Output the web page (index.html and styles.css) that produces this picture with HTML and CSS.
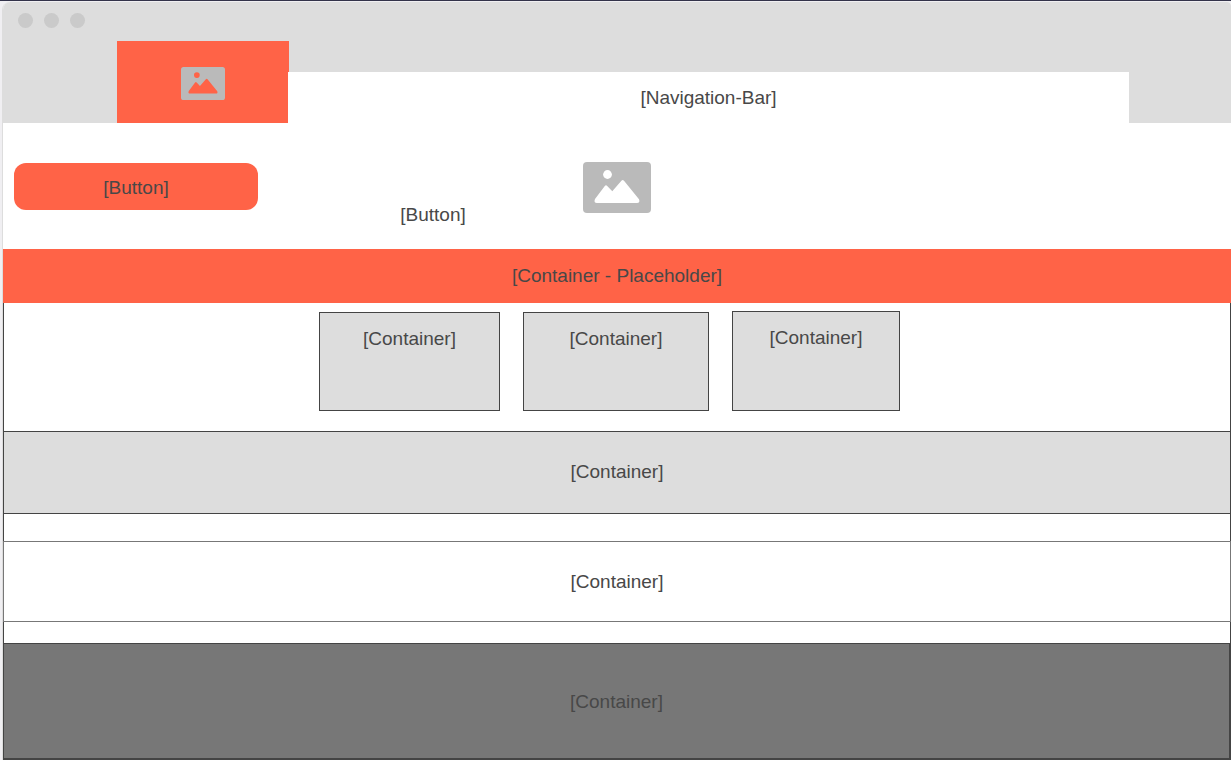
FILE: index.html
```html
<!DOCTYPE html>
<html lang="en">
<head>
  <meta charset="utf-8">
  <title>Wireframe</title>
  <link rel="stylesheet" href="styles.css">
</head>
<body>
  <div class="window">
    <header class="header">
      <div class="dots"><span class="dot"></span><span class="dot"></span><span class="dot"></span></div>
      <div class="header-row">
        <div class="logo">
          <svg class="picture picture-small" viewBox="0 0 68 51" role="img" aria-label="Logo">
            <rect width="68" height="51" rx="4" fill="#bababa"/>
            <g class="picture-scene">
              <circle cx="24.5" cy="12.5" r="4.4"/>
              <path d="M12 37 21.8 24Q23 22.6 24.2 24L29.3 29.3 38.4 18.8Q39.7 17.4 41 18.8L56 37.3Q57.4 41 54 41H14Q10.4 41 12 37Z"/>
            </g>
          </svg>
        </div>
        <nav class="nav">[Navigation-Bar]</nav>
      </div>
    </header>

    <main class="main">
      <section class="hero">
        <div class="actions">
          <button class="button button-primary" type="button">[Button]</button>
          <button class="button button-plain" type="button">[Button]</button>
        </div>
        <svg class="picture" viewBox="0 0 68 51" role="img" aria-label="Picture">
          <rect width="68" height="51" rx="4" fill="#bababa"/>
          <g class="picture-scene">
            <circle cx="24.5" cy="12.5" r="4.4"/>
            <path d="M12 37 21.8 24Q23 22.6 24.2 24L29.3 29.3 38.4 18.8Q39.7 17.4 41 18.8L56 37.3Q57.4 41 54 41H14Q10.4 41 12 37Z"/>
          </g>
        </svg>
      </section>

      <section class="banner">[Container - Placeholder]</section>

      <div class="frame">
        <section class="cards">
          <article class="card card-medium">[Container]</article>
          <article class="card card-wide">[Container]</article>
          <article class="card card-tall">[Container]</article>
        </section>
        <section class="band band-grey">[Container]</section>
        <section class="band band-white">[Container]</section>
      </div>
    </main>

    <footer class="footer">[Container]</footer>
  </div>
</body>
</html>
```

FILE: styles.css
```css
* {
  box-sizing: border-box;
}

body {
  margin: 0;
  border-top: 1px solid #33334a;
  padding: 1px 0 0 2px;
  background: #f0eff2;
  color: #484848;
  font-family: "Liberation Sans", Arial, sans-serif;
  font-size: 19px;
  line-height: 22px;
}

.window {
  border-left: 1px solid #ddd;
  border-radius: 8px 4px 0 0;
  background: #fff;
  overflow: hidden;
}

.header {
  padding: 11px 102px 0 15px;
  background: #ddd;
}

.dots {
  display: flex;
  gap: 11px;
  height: 28px;
}

.dot {
  width: 15px;
  height: 15px;
  border-radius: 50%;
  background: #cacaca;
}

.header-row {
  display: flex;
  align-items: flex-end;
  padding-left: 99px;
}

.logo {
  display: flex;
  align-items: center;
  justify-content: center;
  width: 172px;
  height: 82px;
  padding-top: 2px;
  background: #ff6347;
  color: #ff6347;
}

.nav {
  flex: 1;
  margin-left: -1px;
  padding: 15px 0 14px;
  background: #fff;
  text-align: center;
}

.picture {
  display: block;
  width: 68px;
  height: 51px;
}

.picture-small {
  width: 44px;
  height: 33px;
}

.picture-scene {
  fill: #fff;
}

.logo .picture-scene {
  fill: currentColor;
}

.hero {
  display: grid;
  grid-template-columns: 1fr auto 1fr;
  align-items: start;
  padding: 39px 0 11px;
}

.actions {
  display: flex;
  gap: 53px;
  padding: 1px 0 0 11px;
}

.button {
  width: 244px;
  height: 47px;
  border: 0;
  border-radius: 12px;
  padding: 2px 0 0;
  color: inherit;
  font: inherit;
}

.button-primary {
  background: #ff6347;
}

.button-plain {
  margin-top: 28px;
  padding: 0;
  background: transparent;
}

.banner {
  padding: 16px 0;
  background: #ff6347;
  text-align: center;
}

.frame {
  border: solid #444;
  border-width: 0 1px;
  padding-bottom: 21px;
}

.cards {
  display: flex;
  align-items: flex-end;
  justify-content: center;
  gap: 23px;
  padding: 8px 15px 20px 0;
}

.card {
  height: 99px;
  border: 1px solid #444;
  padding-top: 15px;
  background: #ddd;
  text-align: center;
}

.card-medium {
  width: 181px;
}

.card-wide {
  width: 186px;
}

.card-tall {
  width: 168px;
  height: 100px;
}

.band {
  margin: 0 -1px;
  border: 1px solid #444;
  text-align: center;
}

.band-grey {
  padding: 29px 0 30px;
  background: #ddd;
}

.band-white {
  margin-top: 27px;
  border-color: #777;
  padding: 29px 0 28px;
}

.footer {
  border: solid #444;
  border-width: 1px 2px 2px 1px;
  padding: 47px 0 45px;
  background: #777;
  text-align: center;
}
```
